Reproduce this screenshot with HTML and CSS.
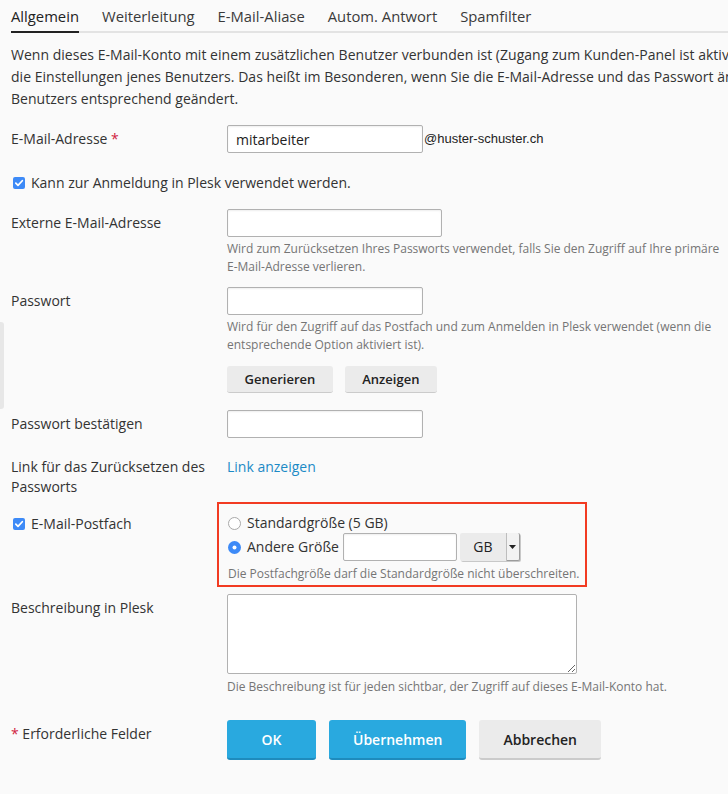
FILE: index.html
```html
<!DOCTYPE html>
<html lang="de">
<head>
<meta charset="utf-8">
<title>E-Mail-Konto</title>
<link rel="stylesheet" href="styles.css">
</head>
<body>
<div class="side-handle"></div>
<div class="page">
  <nav class="tabs">
    <span class="tab active">Allgemein</span>
    <span class="tab">Weiterleitung</span>
    <span class="tab">E-Mail-Aliase</span>
    <span class="tab">Autom. Antwort</span>
    <span class="tab">Spamfilter</span>
  </nav>

  <p class="intro">Wenn dieses E-Mail-Konto mit einem zusätzlichen Benutzer verbunden ist (Zugang zum Kunden-Panel ist aktiviert), gelten für dieses E-Mail-Konto<br>die Einstellungen jenes Benutzers. Das heißt im Besonderen, wenn Sie die E-Mail-Adresse und das Passwort ändern, werden die Einstellungen des<br>Benutzers entsprechend geändert.</p>

  <form class="form">
    <div class="row row-email">
      <div class="label">E-Mail-Adresse <span class="req">*</span></div>
      <div class="field inline">
        <input class="text w195" type="text" value="mitarbeiter">
        <span class="domain">@huster-schuster.ch</span>
      </div>
    </div>

    <div class="check-row">
      <span class="cb"><svg width="12" height="12" viewBox="0 0 12 12"><rect width="12" height="12" rx="2" fill="#3d8af7"/><path d="M2.8 6.2 L5 8.4 L9.3 3.7" fill="none" stroke="#fff" stroke-width="1.7" stroke-linecap="round" stroke-linejoin="round"/></svg></span>
      <span>Kann zur Anmeldung in Plesk verwendet werden.</span>
    </div>

    <div class="row row-ext">
      <div class="label">Externe E-Mail-Adresse</div>
      <div class="field">
        <input class="text w214" type="text">
        <div class="help">Wird zum Zurücksetzen Ihres Passworts verwendet, falls Sie den Zugriff auf Ihre primäre<br>E-Mail-Adresse verlieren.</div>
      </div>
    </div>

    <div class="row row-pass">
      <div class="label">Passwort</div>
      <div class="field">
        <input class="text w195" type="password">
        <div class="help">Wird für den Zugriff auf das Postfach und zum Anmelden in Plesk verwendet (wenn die<br>entsprechende Option aktiviert ist).</div>
        <div class="btn-line">
          <button type="button" class="btn small">Generieren</button>
          <button type="button" class="btn small">Anzeigen</button>
        </div>
      </div>
    </div>

    <div class="row row-confirm">
      <div class="label">Passwort bestätigen</div>
      <div class="field">
        <input class="text w195" type="password">
      </div>
    </div>

    <div class="row row-link">
      <div class="label">Link für das Zurücksetzen des<br>Passworts</div>
      <div class="field"><a class="link" href="#">Link anzeigen</a></div>
    </div>

    <div class="row row-box">
      <div class="label check-label">
        <span class="cb"><svg width="12" height="12" viewBox="0 0 12 12"><rect width="12" height="12" rx="2" fill="#3d8af7"/><path d="M2.8 6.2 L5 8.4 L9.3 3.7" fill="none" stroke="#fff" stroke-width="1.7" stroke-linecap="round" stroke-linejoin="round"/></svg></span>
        <span>E-Mail-Postfach</span>
      </div>
      <div class="field">
        <div class="highlight">
          <div class="radio-line">
            <span class="radio"><svg width="13" height="13" viewBox="0 0 13 13"><circle cx="6.5" cy="6.5" r="6" fill="#fff" stroke="#a8a8a8"/></svg></span>
            <span>Standardgröße (5 GB)</span>
          </div>
          <div class="radio-line size-line">
            <span class="radio"><svg width="13" height="13" viewBox="0 0 13 13"><circle cx="6.5" cy="6.5" r="6.5" fill="#3d8af7"/><circle cx="6.5" cy="6.5" r="2" fill="#fff"/></svg></span>
            <span>Andere Größe</span>
            <input class="text w114" type="text">
            <span class="select"><span class="sel-val">GB</span><span class="sel-arrow"><svg width="7" height="4" viewBox="0 0 7 4"><path d="M0 0 H7 L3.5 4 Z" fill="#222"/></svg></span></span>
          </div>
          <div class="help">Die Postfachgröße darf die Standardgröße nicht überschreiten.</div>
        </div>
      </div>
    </div>

    <div class="row row-desc">
      <div class="label">Beschreibung in Plesk</div>
      <div class="field">
        <textarea class="area"></textarea>
        <div class="help">Die Beschreibung ist für jeden sichtbar, der Zugriff auf dieses E-Mail-Konto hat.</div>
      </div>
    </div>

    <div class="row row-actions">
      <div class="label"><span class="req">*</span> Erforderliche Felder</div>
      <div class="field actions">
        <button type="button" class="btn primary">OK</button>
        <button type="button" class="btn primary">Übernehmen</button>
        <button type="button" class="btn">Abbrechen</button>
      </div>
    </div>
  </form>
</div>
</body>
</html>
```

FILE: styles.css
```css
html, body {
  margin: 0;
  padding: 0;
  background: #fafafa;
  overflow: hidden;
}

body {
  font-family: "Open Sans", "Noto Sans", sans-serif;
  font-size: 14px;
  line-height: 20px;
  color: #333;
  position: relative;
  width: 728px;
  height: 794px;
}

.side-handle {
  position: absolute;
  left: 0;
  top: 322px;
  width: 4px;
  height: 87px;
  background: #e7e7e7;
  border-radius: 0 3px 3px 0;
}

.page {
  padding: 0 0 0 11px;
  width: 1100px;
}

/* Tabs */
.tabs {
  display: flex;
  gap: 23px;
  padding-top: 6px;
  border-bottom: 2px solid #e3e3e3;
  width: 717px;
}

.tab {
  font-size: 14.8px;
  padding-bottom: 5px;
  border-bottom: 2px solid transparent;
  margin-bottom: -2px;
  color: #3a3a3a;
  white-space: nowrap;
}

.tab.active {
  color: #222;
  border-bottom-color: #222;
}

/* Intro */
.intro {
  margin: 11px 0 0;
  line-height: 22px;
  white-space: nowrap;
  color: #333;
  letter-spacing: 0.025px;
}

/* Form */
.form {
  margin: 0;
}

.row {
  display: grid;
  grid-template-columns: 216px auto;
  align-items: start;
}

.label {
  padding-top: 4px;
  color: #333;
}

.req {
  color: #d0243f;
}

.field {
  display: flex;
  flex-direction: column;
  align-items: flex-start;
}

.field.inline {
  flex-direction: row;
  align-items: center;
}

.text {
  box-sizing: border-box;
  height: 28px;
  border: 1px solid #b1b1b1;
  border-radius: 2px;
  background: #fff;
  box-shadow: inset 0 1px 2px rgba(0, 0, 0, 0.07);
  font-family: "Open Sans", sans-serif;
  font-size: 14px;
  color: #222;
  padding: 0 8px;
  margin: 0;
  outline: none;
}

.w195 { width: 196px; }
.w214 { width: 215px; }
.w114 { width: 114px; }

.domain {
  font-family: "Liberation Sans", Arial, sans-serif;
  font-size: 13px;
  color: #222;
  margin-left: 1px;
}

.help {
  font-size: 12px;
  line-height: 18px;
  color: #757575;
  white-space: nowrap;
  margin-top: 3px;
}

.row-email { margin-top: 15px; }

.check-row {
  display: flex;
  align-items: center;
  margin-top: 20px;
  padding-left: 2px;
}

.cb {
  display: inline-flex;
  width: 12px;
  height: 12px;
  margin-right: 6px;
}

.row-ext { margin-top: 16px; }
.row-pass { margin-top: 11px; }

.btn-line {
  display: flex;
  gap: 12px;
  margin-top: 12px;
}

.btn {
  font-family: "Open Sans", sans-serif;
  font-weight: 600;
  font-size: 14px;
  color: #222;
  background: #ebebeb;
  border: 0;
  border-bottom: 2px solid #cbcbcb;
  border-radius: 3px;
  padding: 0 24px;
  height: 40px;
  margin: 0;
  cursor: pointer;
}

.btn.small {
  font-size: 13px;
  height: 27px;
  padding: 0 17.5px;
  border-bottom-width: 1px;
}

.btn.primary {
  background: #29a9df;
  border-bottom-color: #1e8bbd;
  color: #fff;
  min-width: 89px;
}

.row-confirm { margin-top: 17px; }
.row-link { margin-top: 15px; }

.link {
  color: #1c8ac6;
  text-decoration: none;
  padding-top: 4px;
}

.row-box { margin-top: 5px; }

.check-label {
  display: flex;
  align-items: center;
  padding-top: 12px;
  padding-left: 2px;
}

.highlight {
  box-sizing: border-box;
  width: 370px;
  margin-left: -10px;
  border: 2px solid #f23b22;
  padding: 9px 6px 2px 9px;
}

.radio-line {
  display: flex;
  align-items: center;
  height: 20px;
}

.radio {
  display: inline-flex;
  width: 13px;
  height: 13px;
  margin-right: 6px;
}

.size-line {
  height: 28px;
}

.size-line .text {
  margin-left: 4px;
}

.select {
  display: inline-flex;
  box-sizing: border-box;
  height: 28px;
  width: 60px;
  margin-left: 3px;
  background: #ebebeb;
  border-radius: 2px;
  box-shadow: 1px 1px 0 #c8c8c8;
}

.sel-val {
  flex: 1;
  display: flex;
  align-items: center;
  justify-content: center;
  color: #222;
}

.sel-arrow {
  box-sizing: border-box;
  width: 14px;
  display: flex;
  align-items: center;
  justify-content: center;
  border-left: 1px solid #bdbdbd;
  background: #f2f2f2;
  border-right: 1px solid #9c9c9c;
  border-bottom: 1px solid #9c9c9c;
  border-radius: 0 2px 2px 0;
}

.highlight .help {
  margin-top: 4px;
}

.row-desc { margin-top: 7px; }

.area {
  box-sizing: border-box;
  width: 350px;
  height: 80px;
  border: 1px solid #b1b1b1;
  border-radius: 2px;
  background: #fff;
  margin: 0;
  padding: 4px 8px;
  font-family: "Open Sans", sans-serif;
  font-size: 14px;
  resize: both;
  outline: none;
}

.row-desc .help { margin-top: 4px; }

.row-actions { margin-top: 24px; }

.actions {
  flex-direction: row;
  gap: 13px;
}
```
